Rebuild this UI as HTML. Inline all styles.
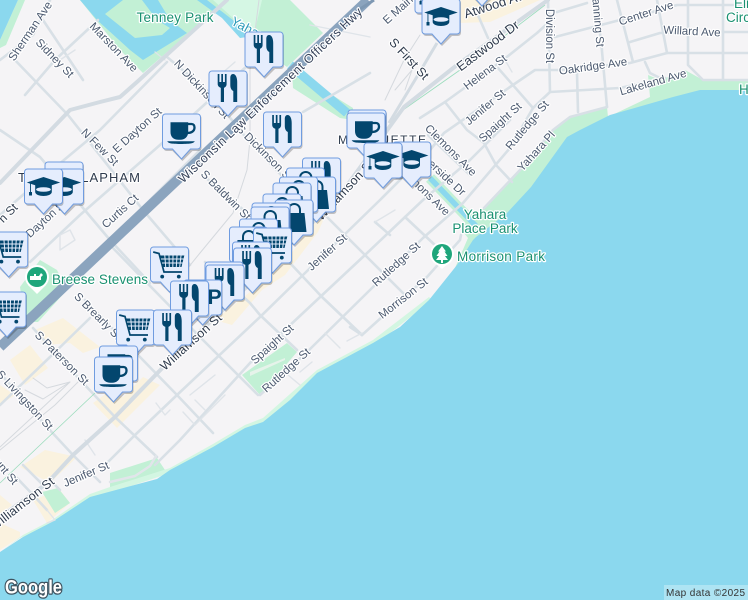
<!DOCTYPE html>
<html><head><meta charset="utf-8"><title>Map</title>
<style>
html,body{margin:0;padding:0;width:748px;height:600px;overflow:hidden;background:#f5f4f6}
svg{display:block;font-family:"Liberation Sans",sans-serif}
.w{fill:#8bd8ee}
.g{fill:#c2f0d5}
.b{fill:#faf2df}
.r,.a,.t,.n{fill:none;stroke-linejoin:round;stroke-linecap:round}
.r{stroke:#d8e0e6;stroke-width:2.6}
.a{stroke:#d3dbe2;stroke-width:4}
.t{stroke:#dfe4e9;stroke-width:1.4}
.n{stroke:#d5d9de;stroke-width:1}
text{paint-order:stroke;stroke:#fff;stroke-width:2.4px;stroke-linejoin:round;text-anchor:middle}
.l{font-size:11.5px;fill:#4c5a70}
.d{font-size:13px;fill:#2f3b4d}
.p{font-size:13.5px;fill:#1a9171}
</style></head><body>
<svg width="748" height="600" viewBox="0 0 748 600" xmlns="http://www.w3.org/2000/svg">
<defs>
<g id="mk">
<path d="M-15-44H17a3 3 0 0 1 3 3V-11a3 3 0 0 1-3 3H11L1 2-9-8H-15a3 3 0 0 1-3-3V-41a3 3 0 0 1 3-3Z" fill="#000" opacity=".22"/>
<path d="M-16-45H16a3 3 0 0 1 3 3V-13a3 3 0 0 1-3 3H9L0 0-9-10H-16a3 3 0 0 1-3-3V-42a3 3 0 0 1 3-3Z" fill="#e5edfd" stroke="#6f9ce0" stroke-width="1"/>
</g>
<g id="fork"><use href="#mk"/><path fill="#03466e" d="M-10.3-42h1.7v8h1.9v-8h1.7v8h1.9v-8H-1.4v10c0 2-1.2 3.3-2.6 3.8V-14h-3.2v-14.2c-1.6-.5-3.1-1.8-3.1-3.8ZM5-42C7.8-42 9.2-38.500 9.200-34V-14H5.300V-25C3.300-26 2.300-28 2.300-31V-38C2.300-40.500 3.300-42 5-42Z"/></g>
<g id="cup"><use href="#mk"/><path fill="#03466e" d="M-11-36.700H6.700V-27C6.700-22 3-19.300-1-19.300H-3C-8-19.300-11-22-11-27ZM-14.300-17.700H13.300C12-15.800 10-15-1-15-11-15-13-15.800-14.300-17.700Z"/><path fill="none" stroke="#03466e" stroke-width="2.300" d="M6-35H10C12-35 13-33.500 13-31.500 13-28 10-26 6-26"/></g>
<g id="cap"><use href="#mk"/><path fill="#03466e" d="M0-37 16.700-31.500 8.300-28.700V-22C8.300-19.500 4-18 0-18S-8.300-19.500-8.300-22V-28.700L-12.600-30.100V-22H-11.500V-18.500H-14.500V-22H-13.500V-30.400L-16.700-31.500Z"/><ellipse cx="0" cy="-24.500" rx="7.400" ry="2.300" fill="#e5edfd"/></g>
<g id="cart"><use href="#mk"/><path fill="none" stroke="#03466e" stroke-width="1.700" d="M-16.300-40-10.500-38.500-5.500-20H12.500"/><path fill="#03466e" d="M-9.500-36.500H14.800L12-25H-6.500Z"/><path stroke="#e5edfd" stroke-width="1" fill="none" d="M-4.700-36.500-3.800-25M-.5-36.500-.2-25M3.500-36.500 3.300-25M7.500-36.500 6.800-25M11.500-36.500 10.200-25M-8.500-33H14M-7.500-29H13"/><circle cx="-7.300" cy="-15.400" r="1.900" fill="#03466e"/><circle cx="9.300" cy="-15.400" r="1.900" fill="#03466e"/></g>
<g id="bag"><use href="#mk"/><path fill="#03466e" d="M-11-32H10.500L12.500-13H-13Z"/><path fill="none" stroke="#03466e" stroke-width="2" d="M-5.500-28V-35C-5.500-43 6-43 6-35V-28"/></g>
<g id="park"><use href="#mk"/><text x="12" y="-21" font-size="21" font-weight="700" style="fill:#03466e;stroke:none">P</text></g>
</defs>

<rect width="748" height="600" fill="#f5f4f6"/>

<!-- commercial tint -->
<path class="b" d="M35 330 63 318 100 347 83 353 70 343 45 345ZM10 360 30 345 48 368 25 385ZM0 385 15 395 0 405ZM93 403 117 428 160 385 143 377 123 397 107 393ZM20 467 45 450 77 457 50 483 35 475ZM33 500 60 490 70 503 47 523ZM0 523 20 532 20 537 0 550ZM0 495 12 505 0 515ZM215 320 240 300 265 280 285 262 310 228 330 205 318 232 285 275 262 290 232 325ZM462 0 540 0 490 22 425 24 430 10Z"/>

<!-- parks -->
<path class="g" d="M80 0H227L143 73 120 50Z"/>
<path class="g" d="M230 0H290L323 33 287 67 250 40 215 5Z"/>
<path fill="#d5f7e4" d="M213 0H262L255 30 243 27Z"/>
<path class="g" d="M0 40 18 0 25 0 6 45 0 48Z"/>
<path class="g" d="M20 287 40 260 57 270 67 290 38 322 25 322Z"/>
<path class="g" d="M242 375 287 343 297 352 260 395Z"/>
<path fill="#e6f3ea" d="M250 372 285 358 285 360 250 376Z"/>
<path class="g" d="M110 473 157 458 167 473 110 488ZM42 492 58 488 70 503 55 513Z"/>
<path class="g" d="M292 70 353 108 353 120 340 118 293 88Z"/>
<path class="g" d="M484 208 520 170 553 130 570 117 607 107 608 117 650 97 648 75 660 80 685 70 703 80 748 80V95L684 100 607 125 567 147 531 197 507 221 476 245 470 270 440 298 428 302 455 268 468 238 460 228Z"/>
<path fill="#d3f6e2" d="M0 552 23 535 52 520 90 494 110 487 170 468 213 444 245 425 263 418 317 370 373 340 429 297 432 300 375 345 320 375 263 424 245 430 213 450 170 473 92 499 54 524 20 538Z"/>

<!-- water -->
<path class="w" d="M0 0H18L0 40Z"/>
<path class="w" d="M80 0 97 20 130 50 143 60 187 33 170 20 158 0Z"/>
<path class="g" d="M123 0H142L157 20 170 28 162 35 135 38 105 14Z"/>
<path class="w" d="M197 0H207L238 24 247 37 240 38 222 18Z"/>
<path fill="none" stroke="#8bd8ee" stroke-width="9" d="M290 65 347 113"/>
<path fill="none" stroke="#c2f0d5" stroke-width="11" d="M430 178 476 226"/>
<path fill="none" stroke="#8bd8ee" stroke-width="5.500" d="M430 178 476 226"/>
<path class="w" d="M0 552 23 537 52 522 90 497 157 479 170 470 213 447 245 428 263 422 290 400 317 373 373 343 400 327 429 300 457 265 473 240 476 237 507 213 531 187 567 137 580 130 610 115 673 97 700 90 748 90V600H0Z"/>

<!-- minor roads -->
<g class="r">
<path d="M107 463 135 435 177 395 260 317 303 275 380 200 430 150 444 133 510 87 535 70 560 70 630 63 667 53 748 53"/>
<path d="M155 465 180 440 250 363 287 328 365 255 423 200 470 160 510 120"/>
<path d="M260 395 307 352 373 287 423 238 463 203 510 148 533 108 550 92 548 0"/>
<path d="M362 335 382 317 427 277 460 240 461 235"/>
<path d="M350 327 362 335"/>
<path d="M484 208 520 170 553 130 570 117 607 107"/>
<path d="M420 118 445 102 503 60 537 33 548 23"/>
<path d="M33 328 83 383 115 417 157 457"/>
<path d="M0 373 47 427 73 455 100 482"/>
<path d="M17 478 35 497 47 510"/>
<path d="M85 300 140 357 177 395 213 433"/>
<path d="M110 245 200 337 258 395"/>
<path d="M205 262 250 303 260 315 297 350"/>
<path d="M290 263 322 297 362 335"/>
<path d="M327 217 365 255 407 297"/>
<path d="M405 217 437 247"/>
<path d="M167 57 210 93 248 140 283 177 310 205"/>
<path d="M205 177 247 213 283 250"/>
<path d="M43 20 83 80"/>
<path d="M13 58 68 115 143 210 190 265"/>
<path d="M0 130 40 157 110 240 150 283"/>
<path d="M0 215 40 180 100 130 167 62"/>
<path d="M30 262 80 215 160 145 215 95 257 57"/>
<path d="M80 270 120 230 165 185 200 150"/>
<path d="M25 95 55 60 98 20"/>
<path d="M0 60 33 35 50 0"/>
<path d="M498 68 533 108"/>
<path d="M445 102 467 130 484 143 496 165 512 182"/>
<path d="M477 13 488 38"/>
<path d="M390 235 375 222M428 135 470 175"/>
<path d="M550 92 620 88 665 78"/>
<path d="M577 73 578 112"/>
<path d="M595 0 601 40 607 107"/>
<path d="M617 0 633 62"/>
<path d="M657 0 667 53"/>
<path d="M630 42 660 33 690 33"/>
<path d="M688 0V65L703 80H748"/>
<path d="M723 0V80"/>
<path d="M723 32H748"/>
<path d="M557 12 587 3"/>
<path d="M555 37 620 20 660 10 677 5H748"/>
<path d="M645 62 650 73 660 78"/>
<path d="M303 112 370 73"/>
<path d="M50 357 90 318M0 405 50 357"/>
<path d="M170 360 130 400M23 465 43 485"/>
</g>
<g class="t">
<path d="M325 333 340 348M347 341 362 333"/>
<path d="M288 375 300 385M312 362 300 372"/>
<path d="M156 403 165 415 170 410M190 395 215 375M195 400 205 410"/>
<path d="M183 412 195 425 225 395"/>
<path d="M220 75 235 62M155 52 165 60"/>
<path d="M8 240 25 255"/>
<path d="M505 60 512 72M375 222 395 210"/>
<path d="M310 25 370 37"/>
<path d="M47 510 55 520 47 523"/>
<path d="M85 440 95 455"/>
<path d="M60 60 75 50"/>
<path d="M60 235 70 230 75 240 60 250Z"/>
</g>

<!-- rails and paths -->
<g class="n">
<path d="M250 140 247 170 233 213 200 253 170 290"/>
<path d="M259 0 250 70 250 140"/>
<path d="M70 382 40 410 0 447"/>
<path d="M85 375 55 405 0 450"/>
<path d="M33 378 47 388 70 382M25 390 43 399 70 382"/>
<path d="M385 100 404 60 420 35"/>
<path d="M395 90 412 70 405 90"/>
</g>
<path fill="none" stroke="#9bdcbd" stroke-width=".8" d="M0 483 95 393M403 110 460 70 545 5"/>

<!-- arterials -->
<g class="a">
<path d="M0 518 17 505 42 487 50 480 73 455 115 417 170 360 233 300 310 225 340 195 404 107 457 65 548 0"/>
<path d="M0 183 70 110 100 102 120 97 137 82 227 0"/>
<path d="M110 482 135 476 150 466 156 456" style="stroke:#e1e5ea;stroke-width:2.500"/>
<path d="M50 480 60 490" style="stroke:#d8e0e6;stroke-width:2.500"/>
</g>
<path d="M389 123 415 80 437 43" fill="none" stroke="#d3dbe2" stroke-width="3"/>
<path d="M0 347 50 300 333 33 368 0" fill="none" stroke="#8ba4be" stroke-width="10"/>
<path d="M348 17 374 0" fill="none" stroke="#7e98b3" stroke-width="3"/>

<!-- labels -->
<text class="p" x="175" y="22" textLength="77">Tenney Park</text>
<text class="l" style="fill:#2c9bb8;text-anchor:start;font-size:13px" transform="translate(230 24) rotate(28)">Yahara</text>
<text class="l" transform="translate(30 31) rotate(-56)" dy="4">Sherman Ave</text>
<text class="l" transform="translate(55 58) rotate(46)" dy="4">Sidney St</text>
<text class="l" transform="translate(114 47) rotate(46)" dy="4">Marston Ave</text>
<text class="l" transform="translate(202 89) rotate(47)" dy="4">N Dickinson St</text>
<text class="l" transform="translate(265 153) rotate(45)" dy="4">S Dickinson St</text>
<text class="l" transform="translate(137 130) rotate(-42)" dy="4">E Dayton St</text>
<text class="l" transform="translate(100 147) rotate(45)" dy="4">N Few St</text>
<text class="l" transform="translate(226 195) rotate(45)" dy="4">S Baldwin St</text>
<text class="l" transform="translate(120 211) rotate(-42)" dy="4">Curtis Ct</text>
<text class="l" transform="translate(42 222) rotate(-42)" dy="4">E Dayton St</text>
<text class="l" style="fill:#2f3b4d;font-size:12px" transform="translate(8 213) rotate(-45)" dy="4">n St</text>
<text class="d" x="79" y="182" textLength="122" lengthAdjust="spacing">TENNEY-LAPHAM</text>
<text class="d" x="382" y="144" textLength="88" lengthAdjust="spacing" style="font-size:12px">MARQUETTE</text>
<text class="d" transform="translate(270 95) rotate(-43.500)" dy="4.500" style="font-size:12.500px;fill:#36425a" textLength="248" lengthAdjust="spacing">Wisconsin Law Enforcement Officers Hwy</text>
<text class="d" transform="translate(345 190) rotate(-47)" dy="4" style="font-size:12.500px" textLength="78">Williamson St</text>
<text class="d" transform="translate(191 342) rotate(-42)" dy="4" style="font-size:12.500px" textLength="78">Williamson St</text>
<text class="d" transform="translate(22 504) rotate(-38)" dy="4" style="font-size:12.500px" textLength="78">Williamson St</text>
<text class="l" transform="translate(327 252) rotate(-42)" dy="4">Jenifer St</text>
<text class="l" transform="translate(86 474) rotate(-23)" dy="4">Jenifer St</text>
<text class="l" transform="translate(272 344) rotate(-42)" dy="4">Spaight St</text>
<text class="l" transform="translate(286 370) rotate(-42)" dy="4">Rutledge St</text>
<text class="l" transform="translate(396 264) rotate(-42)" dy="4">Rutledge St</text>
<text class="l" transform="translate(403 298) rotate(-38)" dy="4">Morrison St</text>
<text class="d" transform="translate(409 59) rotate(47)" dy="4" style="font-size:12.500px">S First St</text>
<text class="l" transform="translate(403 5) rotate(-42)" dy="4">E Main St</text>
<text class="d" transform="translate(497 4) rotate(-18)" dy="4">Atwood Ave</text>
<text class="d" transform="translate(488 46) rotate(-37)" dy="4">Eastwood Dr</text>
<text class="l" transform="translate(485 72) rotate(-37)" dy="4">Helena St</text>
<text class="l" transform="translate(485 107) rotate(-40)" dy="4">Jenifer St</text>
<text class="l" transform="translate(500 122) rotate(-42)" dy="4">Spaight St</text>
<text class="l" transform="translate(527 125) rotate(-50)" dy="4">Rutledge St</text>
<text class="l" transform="translate(451 150) rotate(45)" dy="4">Clemons Ave</text>
<text class="l" transform="translate(536 151) rotate(-48)" dy="4">Yahara Pl</text>
<text class="l" transform="translate(441 172) rotate(43)" dy="4">Riverside Dr</text>
<text class="l" transform="translate(424 190) rotate(44)" dy="4">Clemons Ave</text>
<text class="l" transform="translate(550 36) rotate(90)" dy="4">Division St</text>
<text class="l" transform="translate(598 18) rotate(85)" dy="4">Manning St</text>
<text class="l" transform="translate(646 13) rotate(-18)" dy="4">Center Ave</text>
<text class="l" transform="translate(692 31) rotate(3)" dy="4">Willard Ave</text>
<text class="l" transform="translate(593 66) rotate(-8)" dy="4">Oakridge Ave</text>
<text class="l" transform="translate(653 82) rotate(-16)" dy="4">Lakeland Ave</text>
<text class="p" x="485" y="219">Yahara</text>
<text class="p" x="485" y="233">Place Park</text>
<text class="p" x="501" y="261" textLength="88">Morrison Park</text>
<text class="p" x="100" y="284" textLength="96">Breese Stevens</text>
<text class="p" x="734" y="8" style="text-anchor:start">Elmside</text>
<text class="p" x="726" y="22" style="text-anchor:start">Circle</text>
<text class="p" x="739" y="94" style="text-anchor:start">Hudson</text>
<text class="l" transform="translate(62 358) rotate(45)" dy="4">S Paterson St</text>
<text class="l" transform="translate(25 400) rotate(47)" dy="4">S Livingston St</text>
<text class="l" transform="translate(1 465) rotate(50)" dy="4">Blount St</text>
<text class="l" transform="translate(98 316) rotate(45)" dy="4">S Brearly St</text>

<!-- POI pins -->
<g>
<circle cx="37" cy="277" r="12" fill="#fff"/><path d="M28 285 37 294 46 285Z" fill="#fff"/>
<circle cx="37" cy="277" r="10" fill="#1fa67b"/>
<path fill="#fff" d="M30 276h4v-2h2v2h3l2-3 2 2-2 2v3H30Z"/>
<path d="M433 261 442 269 451 261Z" fill="#fff"/><circle cx="442" cy="254" r="12" fill="#fff"/>
<circle cx="442" cy="254" r="10" fill="#1fa67b"/>
<path fill="#fff" d="M442 246 446 251.500H444.500L447.500 256H445L448 260H443V263H441V260H436L439 256H436.500L439.500 251.500H438Z"/>
</g>

<!-- markers, north to south -->
<use href="#cap" x="482" y="6"/>
<use href="#cap" x="434" y="23"/>
<use href="#cap" x="441" y="44"/>
<use href="#fork" x="264" y="77"/>
<use href="#fork" x="228" y="116"/>
<use href="#cup" x="367" y="155"/>
<use href="#fork" x="282.500" y="157"/>
<use href="#cup" x="366" y="158"/>
<use href="#cup" x="181.500" y="159"/>
<use href="#cap" x="411.700" y="187"/>
<use href="#cap" x="383" y="188"/>
<use href="#fork" x="321.500" y="203"/>
<use href="#cap" x="64" y="207"/>
<use href="#bag" x="305.500" y="213"/>
<use href="#cap" x="64.500" y="214"/>
<use href="#cap" x="43.500" y="214"/>
<use href="#bag" x="316.500" y="222"/>
<use href="#bag" x="298.500" y="222"/>
<use href="#bag" x="292" y="228"/>
<use href="#bag" x="282" y="239"/>
<use href="#bag" x="294" y="245"/>
<use href="#bag" x="271" y="248"/>
<use href="#bag" x="270" y="252"/>
<use href="#bag" x="258.500" y="264"/>
<use href="#bag" x="248.500" y="272"/>
<use href="#cart" x="272.500" y="273"/>
<use href="#cart" x="8.700" y="277"/>
<use href="#fork" x="251.500" y="287"/>
<use href="#cart" x="169.500" y="292"/>
<use href="#fork" x="252.500" y="293"/>
<use href="#fork" x="224" y="307"/>
<use href="#fork" x="225" y="310"/>
<use href="#park" x="202.700" y="325"/>
<use href="#fork" x="189.500" y="326"/>
<use href="#cart" x="7" y="337"/>
<use href="#cart" x="135.500" y="355"/>
<use href="#fork" x="172.500" y="355"/>
<use href="#cup" x="118.500" y="391"/>
<use href="#cup" x="113.500" y="402"/>

<!-- attribution -->
<rect x="664" y="585" width="84" height="15" fill="#fff" opacity=".3"/>
<text x="705.500" y="596" textLength="79" style="font-size:10px;fill:#333;stroke:none">Map data ©2025</text>
<text x="33.500" y="593.500" textLength="57" lengthAdjust="spacingAndGlyphs" style="font-size:19px;font-weight:700;fill:#fff;stroke:#3e5360;stroke-width:2.600px">Google</text>
</svg>
</body></html>
